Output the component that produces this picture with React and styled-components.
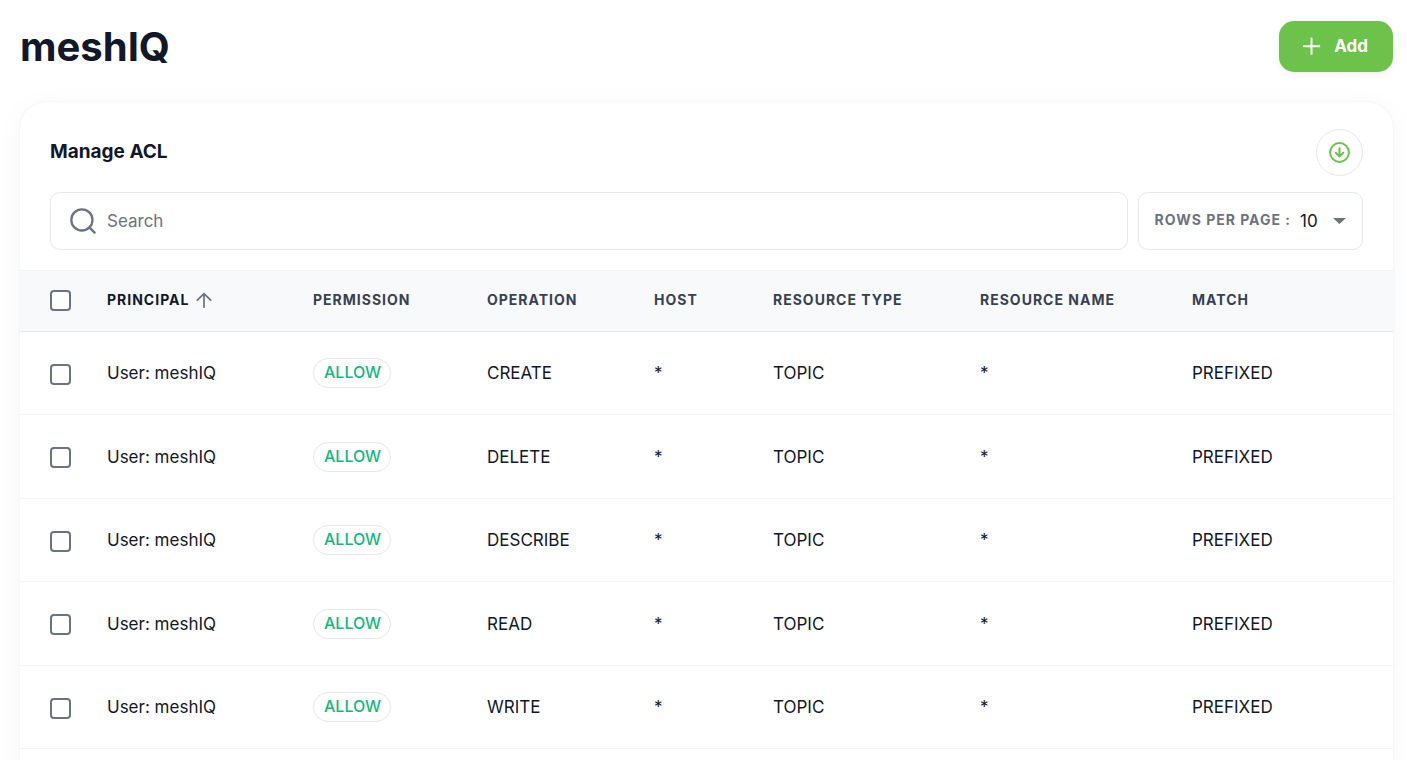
import React, { useState } from "react";
import styled, { createGlobalStyle } from "styled-components";

const columns = [
  { key: "principal", label: "Principal", width: 206, sorted: true },
  { key: "permission", label: "Permission", width: 174 },
  { key: "operation", label: "Operation", width: 167 },
  { key: "host", label: "Host", width: 119 },
  { key: "resourceType", label: "Resource type", width: 207 },
  { key: "resourceName", label: "Resource name", width: 212 },
  { key: "match", label: "Match", width: 201 },
];

const rules = ["CREATE", "DELETE", "DESCRIBE", "READ", "WRITE"].map((operation) => ({
  principal: "User: meshIQ",
  permission: "ALLOW",
  operation,
  host: "*",
  resourceType: "TOPIC",
  resourceName: "*",
  match: "PREFIXED",
}));

const PlusIcon = () => (
  <svg width="18" height="18" viewBox="0 0 18 18" fill="none" stroke="#fff" strokeWidth="2" strokeLinecap="round" aria-hidden="true">
    <path d="M8.5 1.5v15.4M.9 9.2h15.4" />
  </svg>
);

const DownloadIcon = () => (
  <svg width="21" height="21" viewBox="0 0 21 21" fill="none" stroke="#6cc24a" strokeWidth="2" strokeLinecap="round" strokeLinejoin="round" aria-hidden="true">
    <circle cx="10.5" cy="10.5" r="9.4" />
    <path d="M10.5 6.3v8M6.7 10.8l3.8 3.6 3.8-3.6" />
  </svg>
);

const SearchIcon = () => (
  <svg width="26" height="26" viewBox="0 0 26 26" fill="none" stroke="#6b7280" strokeWidth="2.3" strokeLinecap="round" aria-hidden="true">
    <circle cx="11.9" cy="11.9" r="10.6" />
    <path d="M19.6 19.6l5 5" />
  </svg>
);

const SortIcon = () => (
  <svg width="16" height="16" viewBox="0 0 16 16" fill="none" stroke="#6b7280" strokeWidth="1.7" strokeLinecap="round" strokeLinejoin="round" aria-hidden="true">
    <path d="M8 15.2V1.6M1.4 8.2L8 1.6l6.6 6.6" />
  </svg>
);

const App = () => {
  const [query, setQuery] = useState("");
  const [pageSize, setPageSize] = useState("10");

  const visible = rules.filter((rule) =>
    Object.values(rule).join(" ").toLowerCase().includes(query.toLowerCase())
  );

  return (
    <>
      <GlobalStyle />
      <Page>
        <Header>
          <Title>meshIQ</Title>
          <AddButton type="button">
            <PlusIcon />
            Add
          </AddButton>
        </Header>

        <Card>
          <CardHead>
            <CardTitle>Manage ACL</CardTitle>
            <RoundButton type="button" aria-label="Download">
              <DownloadIcon />
            </RoundButton>
          </CardHead>

          <Toolbar>
            <SearchBox>
              <SearchIcon />
              <input
                type="text"
                aria-label="Search"
                placeholder="Search"
                value={query}
                onChange={(e) => setQuery(e.target.value)}
              />
            </SearchBox>
            <PageSize>
              <label htmlFor="page-size">Rows per page :</label>
              <SelectWrap>
                <select
                  id="page-size"
                  value={pageSize}
                  onChange={(e) => setPageSize(e.target.value)}
                >
                  <option>10</option>
                  <option>25</option>
                  <option>50</option>
                </select>
                <svg width="13" height="6" viewBox="0 0 13 6" aria-hidden="true">
                  <path d="M0 0h13L6.5 6z" fill="#6b7280" />
                </svg>
              </SelectWrap>
            </PageSize>
          </Toolbar>

          <Table>
            <colgroup>
              <Col $width={87} />
              {columns.map((col) => (
                <Col key={col.key} $width={col.width} />
              ))}
            </colgroup>
            <thead>
              <tr>
                <HeadCell>
                  <Checkbox aria-label="Select all" />
                </HeadCell>
                {columns.map((col) => (
                  <HeadCell key={col.key} $sorted={col.sorted} aria-sort={col.sorted ? "ascending" : undefined}>
                    <HeadLabel>
                      {col.label}
                      {col.sorted && <SortIcon />}
                    </HeadLabel>
                  </HeadCell>
                ))}
              </tr>
            </thead>
            <tbody>
              {visible.map((rule) => (
                <Row key={rule.operation}>
                  <Cell>
                    <Checkbox aria-label={`Select ${rule.operation}`} />
                  </Cell>
                  {columns.map((col) => (
                    <Cell key={col.key}>
                      {col.key === "permission" ? <Badge>{rule.permission}</Badge> : rule[col.key]}
                    </Cell>
                  ))}
                </Row>
              ))}
            </tbody>
          </Table>
        </Card>
      </Page>
    </>
  );
};

const GlobalStyle = createGlobalStyle`
  * {
    box-sizing: border-box;
  }

  body {
    margin: 0;
    background: #fff;
    color: #111827;
    font-family: Inter, "Liberation Sans", sans-serif;
    font-size: 17px;
  }

  input,
  select,
  button {
    font: inherit;
    color: inherit;
  }
`;

const Page = styled.main`
  padding: 21px 14px 24px 20px;
`;

const Header = styled.header`
  display: flex;
  align-items: center;
  justify-content: space-between;
  margin-bottom: 30px;
`;

const Title = styled.h1`
  margin: 0;
  font-size: 40px;
  line-height: 51px;
  font-weight: 700;
`;

const AddButton = styled.button`
  display: flex;
  align-items: center;
  gap: 13px;
  height: 51px;
  padding: 0 25px 2px 24px;
  border: 0;
  border-radius: 15px;
  background: #6cc24a;
  color: #fff;
  font-weight: 700;
  box-shadow: 0 2px 8px rgba(0, 0, 0, 0.06);
  cursor: pointer;
`;

const Card = styled.section`
  padding-bottom: 60px;
  border-radius: 26px;
  background: #fff;
  box-shadow: 0 0 2px rgba(0, 0, 0, 0.08), 0 5px 30px rgba(0, 0, 0, 0.04);
`;

const CardHead = styled.div`
  display: flex;
  align-items: flex-start;
  justify-content: space-between;
  padding: 27px 30px 16px;
`;

const CardTitle = styled.h2`
  margin: 0;
  font-size: 19px;
  line-height: 46px;
  font-weight: 700;
`;

const RoundButton = styled.button`
  display: grid;
  place-items: center;
  width: 47px;
  height: 47px;
  padding: 0;
  border: 1px solid #e5e7eb;
  border-radius: 50%;
  background: #fff;
  cursor: pointer;
`;

const Toolbar = styled.div`
  display: flex;
  gap: 10px;
  padding: 0 30px 20px;
`;

const SearchBox = styled.div`
  display: flex;
  flex: 1;
  align-items: center;
  gap: 11px;
  height: 58px;
  padding: 0 19px;
  border: 1px solid #e5e7eb;
  border-radius: 10px;

  input {
    flex: 1;
    min-width: 0;
    padding: 0;
    border: 0;
    outline: 0;
    background: transparent;
  }

  input::placeholder {
    color: #6b7280;
    opacity: 1;
  }
`;

const PageSize = styled.div`
  display: flex;
  align-items: center;
  gap: 9px;
  padding: 0 16px;
  border: 1px solid #e5e7eb;
  border-radius: 10px;

  label {
    padding-bottom: 3px;
    color: #6b7280;
    font-size: 14px;
    font-weight: 700;
    letter-spacing: 1px;
    text-transform: uppercase;
  }
`;

const SelectWrap = styled.div`
  display: grid;
  align-items: center;

  select,
  svg {
    grid-area: 1 / 1;
  }

  select {
    appearance: none;
    width: 46px;
    padding: 0;
    border: 0;
    outline: 0;
    background: transparent;
  }

  svg {
    justify-self: end;
    pointer-events: none;
  }
`;

const Table = styled.table`
  width: 100%;
  table-layout: fixed;
  border-collapse: separate;
  border-spacing: 0;
`;

const Col = styled.col`
  width: ${({ $width }) => $width}px;
`;

const HeadCell = styled.th`
  height: 62px;
  padding: 0 0 3px;
  border-top: 1px solid #f3f4f6;
  border-bottom: 1px solid #e5e7eb;
  background: #f8f9fb;
  color: ${({ $sorted }) => ($sorted ? "#111827" : "#374151")};
  font-size: 14px;
  font-weight: 700;
  letter-spacing: 1px;
  text-align: left;
  text-transform: uppercase;

  &:first-child {
    padding: 0 0 1px 30px;
  }
`;

const HeadLabel = styled.span`
  display: flex;
  align-items: center;
  gap: 7px;
`;

const Cell = styled.td`
  height: 83px;
  padding: 0;
  border-bottom: 1px solid #f3f4f6;

  &:first-child {
    padding: 2px 0 0 30px;
  }
`;

const Row = styled.tr`
  &:nth-child(even) ${Cell} {
    height: 84px;
  }
`;

const Checkbox = styled.input.attrs({ type: "checkbox" })`
  appearance: none;
  display: block;
  width: 21px;
  height: 21px;
  margin: 0;
  border: 2px solid #6b7280;
  border-radius: 4px;
  background: #fff;

  &:checked {
    border-color: #6cc24a;
    background: #6cc24a;
  }
`;

const Badge = styled.span`
  display: inline-flex;
  align-items: center;
  height: 30px;
  padding: 0 9px 2px 10px;
  border: 1px solid #e5e7eb;
  border-radius: 15px;
  color: #10b981;
  font-size: 16px;
  font-weight: 500;
`;

export default App;
